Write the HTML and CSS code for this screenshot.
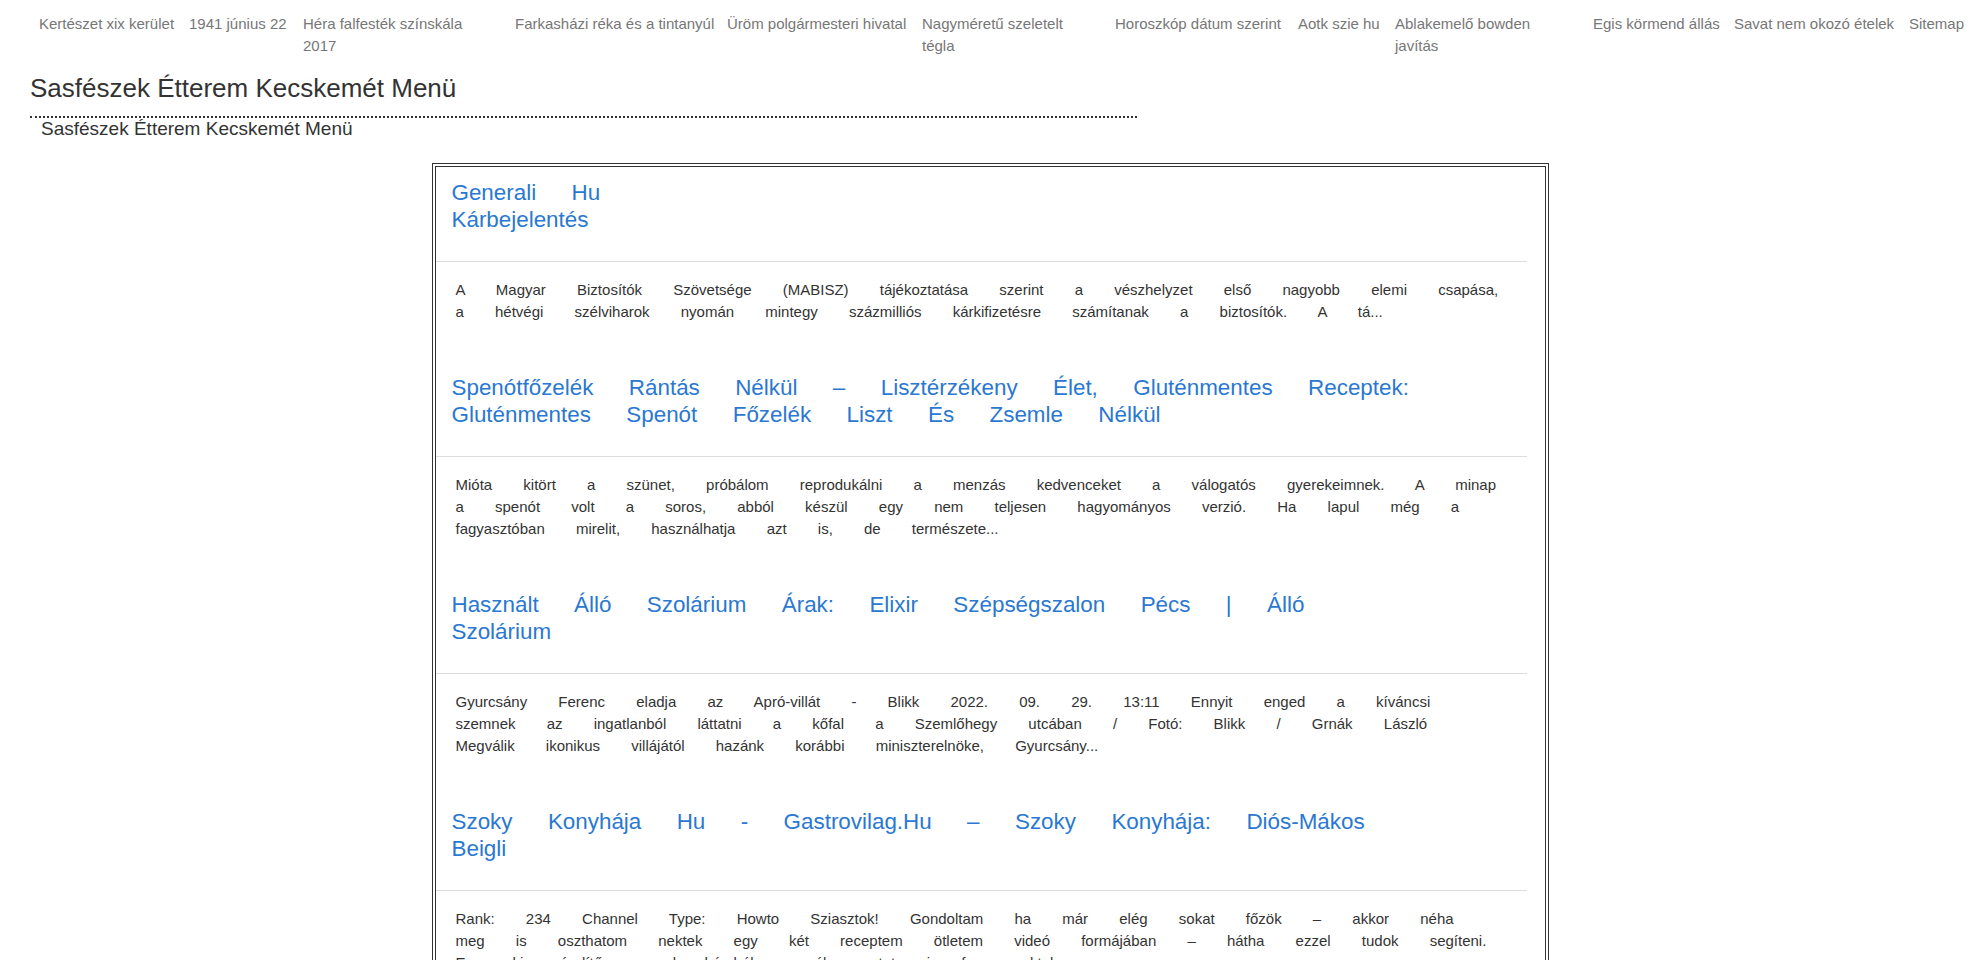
FILE: index.html
```html
<!DOCTYPE html>
<html lang="hu">
<head>
<meta charset="utf-8">
<title>Sasfészek Étterem Kecskemét Menü</title>
<link rel="stylesheet" href="styles.css">
</head>
<body>
<nav class="topnav">
  <a class="nav-link" href="#">Kertészet xix kerület</a>
  <a class="nav-link" href="#">1941 június 22</a>
  <a class="nav-link nav-link--wrap" href="#">Héra falfesték színskála 2017</a>
  <a class="nav-link" href="#">Farkasházi réka és a tintanyúl</a>
  <a class="nav-link" href="#">Üröm polgármesteri hivatal</a>
  <a class="nav-link nav-link--wrap" href="#">Nagyméretű szeletelt tégla</a>
  <a class="nav-link" href="#">Horoszkóp dátum szerint</a>
  <a class="nav-link" href="#">Aotk szie hu</a>
  <a class="nav-link nav-link--wrap" href="#">Ablakemelő bowden javítás</a>
  <a class="nav-link" href="#">Egis körmend állás</a>
  <a class="nav-link" href="#">Savat nem okozó ételek</a>
  <a class="nav-link" href="#">Sitemap</a>
</nav>

<header class="page-header">
  <h1 class="page-title">Sasfészek Étterem Kecskemét Menü</h1>
</header>
<div class="page-subtitle">Sasfészek Étterem Kecskemét Menü</div>

<main class="entries">
  <article class="entry">
    <h2 class="entry-title entry-title--short"><a href="#">Generali Hu Kárbejelentés</a></h2>
    <hr class="entry-rule">
    <p class="entry-excerpt">A Magyar Biztosítók Szövetsége (MABISZ) tájékoztatása szerint a vészhelyzet első nagyobb elemi csapása, a hétvégi szélviharok nyomán mintegy százmilliós kárkifizetésre számítanak a biztosítók. A tá...</p>
  </article>

  <article class="entry">
    <h2 class="entry-title"><a href="#">Spenótfőzelék Rántás Nélkül – Lisztérzékeny Élet, Gluténmentes Receptek: Gluténmentes Spenót Főzelék Liszt És Zsemle Nélkül</a></h2>
    <hr class="entry-rule">
    <p class="entry-excerpt">Mióta kitört a szünet, próbálom reprodukálni a menzás kedvenceket a válogatós gyerekeimnek. A minap a spenót volt a soros, abból készül egy nem teljesen hagyományos verzió. Ha lapul még a fagyasztóban mirelit, használhatja azt is, de természete...</p>
  </article>

  <article class="entry">
    <h2 class="entry-title"><a href="#">Használt Álló Szolárium Árak: Elixir Szépségszalon Pécs | Álló Szolárium</a></h2>
    <hr class="entry-rule">
    <p class="entry-excerpt">Gyurcsány Ferenc eladja az Apró-villát - Blikk 2022. 09. 29. 13:11 Ennyit enged a kíváncsi szemnek az ingatlanból láttatni a kőfal a Szemlőhegy utcában / Fotó: Blikk / Grnák László Megválik ikonikus villájától hazánk korábbi miniszterelnöke, Gyurcsány...</p>
  </article>

  <article class="entry">
    <h2 class="entry-title"><a href="#">Szoky Konyhája Hu - Gastrovilag.Hu – Szoky Konyhája: Diós-Mákos Beigli</a></h2>
    <hr class="entry-rule">
    <p class="entry-excerpt">Rank: 234 Channel Type: Howto Sziasztok! Gondoltam ha már elég sokat főzök – akkor néha meg is oszthatom nektek egy két receptem ötletem videó formájában – hátha ezzel tudok segíteni. Egy kis ízelítő a konyhámból, remélem tetszeni fog nektek...</p>
  </article>
</main>
</body>
</html>
```

FILE: styles.css
```css
html, body {
  margin: 0;
  padding: 0;
  background: #fff;
}

body {
  font-family: "Liberation Sans", Arial, Helvetica, sans-serif;
  color: #333;
}

/* top link strip */
.topnav {
  display: grid;
  grid-template-columns: 150px 114px 212px 212px 195px 193px 183px 97px 198px 141px 175px auto;
  align-items: start;
  padding: 13px 0 0 39px;
  font-size: 15px;
  line-height: 22px;
}

.nav-link {
  color: #777;
  text-decoration: none;
}

.nav-link--wrap {
  max-width: 175px;
}

/* page heading */
.page-header {
  width: 1107px;
  margin: 16px 0 0 30px;
  padding-bottom: 13px;
  border-bottom: 2px dotted #333;
}

.page-title {
  margin: 0;
  font-size: 26px;
  line-height: 30px;
  font-weight: normal;
  color: #333;
}

.page-subtitle {
  margin: 0 0 23px 41px;
  font-size: 19px;
  line-height: 22px;
  color: #333;
}

/* framed list of posts */
.entries {
  box-sizing: border-box;
  width: 1117px;
  margin: 0 auto;
  padding: 0 18px 0 0;
  border: 4px double #333;
}

.entry-title {
  margin: 0;
  padding: 12px 101px 28px 16px;
  font-size: 22.4px;
  line-height: 27px;
  font-weight: normal;
  word-spacing: 29.2px;
}

.entry-title a {
  color: #2a78d1;
  text-decoration: none;
}

.entry-title--short a {
  display: inline-block;
  max-width: 200px;
}

.entry-rule {
  margin: 0;
  height: 0;
  border: 0;
  border-top: 1px solid #ddd;
}

.entry-excerpt {
  margin: 0;
  padding: 17px 20px 39px;
  font-size: 15px;
  line-height: 22px;
  word-spacing: 27px;
  color: #333;
}
```
